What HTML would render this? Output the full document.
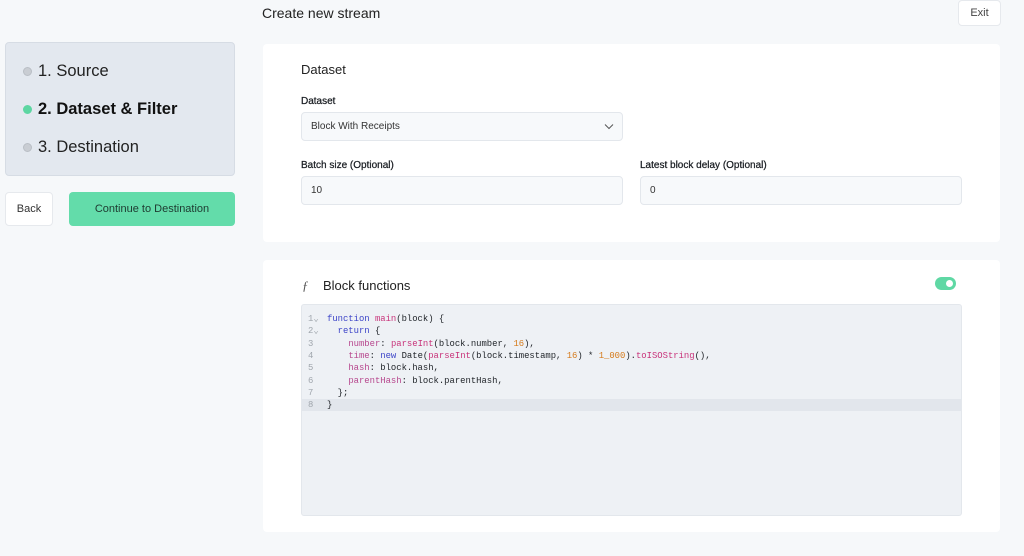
<!DOCTYPE html>
<html><head><meta charset="utf-8"><style>
*{box-sizing:border-box;margin:0;padding:0}
body{width:1024px;height:556px;background:#f6f8fa;font-family:"Liberation Sans",sans-serif;color:#1f2328;position:relative;overflow:hidden}
.abs{position:absolute}
.steps{left:5px;top:42px;width:230px;height:134px;background:#e3e8ef;border:1px solid #d6dce4;border-radius:4px}
.step{position:absolute;left:17px;font-size:16.5px;color:#222;display:flex;align-items:center}
.dot{width:9px;height:9px;border-radius:50%;background:#c9cdd3;border:1px solid #b9bec5;margin-right:6px}
.card{background:#fff;border-radius:4px}
.lbl{font-size:10px;color:#1a1e23;font-weight:normal;-webkit-text-stroke:0.25px #1a1e23}
.inp{background:#f7f9fb;border:1px solid #e3e7ec;border-radius:4px;height:29px;font-size:10px;color:#333;padding:0 9px;display:flex;align-items:center}
.code{left:301px;top:304px;width:661px;height:212px;background:#eef1f5;border:1px solid #e3e7ec;border-radius:3px;font-family:"Liberation Mono",monospace;font-size:8.9px}
.ln{position:absolute;left:0;width:659px;height:12.3px;line-height:12.3px;white-space:pre}
.n{display:inline-block;width:25px;padding-left:6px;color:#a0a6ad}
.k{color:#3d45c8}.f{color:#c8337a}.p{color:#b7488e}.num{color:#d57a1a}.t{color:#333}
</style></head><body>
<div class="abs" style="left:262px;top:5px;font-size:14px;color:#222">Create new stream</div>
<div class="abs" style="left:958px;top:0;width:43px;height:26px;background:#fff;border:1px solid #e6e9ed;border-radius:4px;font-size:11px;color:#444;display:flex;align-items:center;justify-content:center">Exit</div>
<div class="abs steps">
<div class="step" style="top:19px"><span class="dot"></span>1. Source</div>
<div class="step" style="top:57px;font-weight:bold;color:#111"><span class="dot" style="background:#5dd6a2;border-color:#5dd6a2"></span>2. Dataset &amp; Filter</div>
<div class="step" style="top:95px"><span class="dot"></span>3. Destination</div>
</div>
<div class="abs" style="left:5px;top:192px;width:48px;height:34px;background:#fff;border:1px solid #e6e9ed;border-radius:4px;font-size:11px;color:#333;display:flex;align-items:center;justify-content:center">Back</div>
<div class="abs" style="left:69px;top:192px;width:166px;height:34px;background:#63dcaa;border-radius:4px;font-size:11px;color:#1e3a30;display:flex;align-items:center;justify-content:center">Continue to Destination</div>

<div class="abs card" style="left:263px;top:44px;width:737px;height:198px"></div>
<div class="abs" style="left:301px;top:62px;font-size:13px;color:#222">Dataset</div>
<div class="abs lbl" style="left:301px;top:96px">Dataset</div>
<div class="abs inp" style="left:301px;top:112px;width:322px">Block With Receipts
<svg style="position:absolute;right:8px;top:10px" width="10" height="7" viewBox="0 0 10 7"><path d="M1 1.5L5 5.5L9 1.5" fill="none" stroke="#555" stroke-width="1"/></svg></div>
<div class="abs lbl" style="left:301px;top:160px">Batch size (Optional)</div>
<div class="abs inp" style="left:301px;top:176px;width:322px">10</div>
<div class="abs lbl" style="left:640px;top:160px">Latest block delay (Optional)</div>
<div class="abs inp" style="left:640px;top:176px;width:322px">0</div>

<div class="abs card" style="left:263px;top:260px;width:737px;height:272px"></div>
<div class="abs" style="left:302px;top:278px;font-size:13px;font-style:italic;color:#555;font-family:'Liberation Serif',serif">ƒ</div>
<div class="abs" style="left:323px;top:278px;font-size:13px;color:#222">Block functions</div>
<div class="abs" style="left:935px;top:277px;width:21px;height:13px;background:#5fd8a4;border-radius:7px"><div style="position:absolute;right:3px;top:3px;width:7px;height:7px;border-radius:50%;background:#fff"></div></div>
<div class="abs code">
<div class="ln" style="top:8px"><span class="n">1⌄</span><span class="k">function</span> <span class="f">main</span>(block) {</div>
<div class="ln" style="top:20.3px"><span class="n">2⌄</span>  <span class="k">return</span> {</div>
<div class="ln" style="top:32.6px"><span class="n">3</span>    <span class="p">number</span>: <span class="f">parseInt</span>(block.number, <span class="num">16</span>),</div>
<div class="ln" style="top:44.9px"><span class="n">4</span>    <span class="p">time</span>: <span class="k">new</span> Date(<span class="f">parseInt</span>(block.timestamp, <span class="num">16</span>) * <span class="num">1_000</span>).<span class="f">toISOString</span>(),</div>
<div class="ln" style="top:57.2px"><span class="n">5</span>    <span class="p">hash</span>: block.hash,</div>
<div class="ln" style="top:69.5px"><span class="n">6</span>    <span class="p">parentHash</span>: block.parentHash,</div>
<div class="ln" style="top:81.8px"><span class="n">7</span>  };</div>
<div class="ln" style="top:94.1px;background:#e2e6ec"><span class="n">8</span>}</div>
</div>
</body></html>
